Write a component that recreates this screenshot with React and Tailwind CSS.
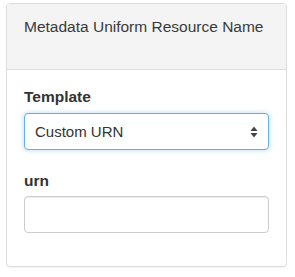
const font = { fontFamily: '"Liberation Sans", Arial, sans-serif' };

function SelectArrows() {
  return (
    <svg width="8" height="12" viewBox="0 0 8 12" className="shrink-0">
      <path d="M4 0.5 L7.5 5 L0.5 5 Z" fill="#444" />
      <path d="M4 11.5 L7.5 7 L0.5 7 Z" fill="#444" />
    </svg>
  );
}

export default function App() {
  return (
    <div
      className="min-h-screen bg-white pt-[3px] pl-[6px] text-[15px] leading-[21px] text-[#333]"
      style={font}
    >
      <div className="w-[281px] overflow-hidden rounded-[4px] border border-[#ddd] bg-white shadow-[0_1px_1px_rgba(0,0,0,0.05)]">
        <div className="border-b border-[#ddd] bg-[#f4f4f4] px-[17px] pt-[12px] pb-[32px]">
          <h3 className="text-[15.5px] font-normal leading-[21px] text-[#3a3a3a]">
            Metadata Uniform Resource Name
          </h3>
        </div>

        <div className="px-[17px] pt-[16px] pb-[33px]">
          <div className="mb-[20px]">
            <label className="mb-[6px] block text-[15.5px] font-bold">Template</label>
            <div className="flex h-[37px] items-center justify-between rounded-[4px] border border-[#66afe9] bg-white pl-[10px] pr-[10px] shadow-[0_0_5px_rgba(102,175,233,0.5)]">
              <span>Custom URN</span>
              <SelectArrows />
            </div>
          </div>

          <div>
            <label className="mb-[5px] block text-[15.5px] font-bold">urn</label>
            <input
              type="text"
              className="block h-[37px] w-full rounded-[4px] border border-[#ccc] bg-white px-[10px] shadow-[inset_0_1px_1px_rgba(0,0,0,0.075)] outline-none"
            />
          </div>
        </div>
      </div>
    </div>
  );
}
